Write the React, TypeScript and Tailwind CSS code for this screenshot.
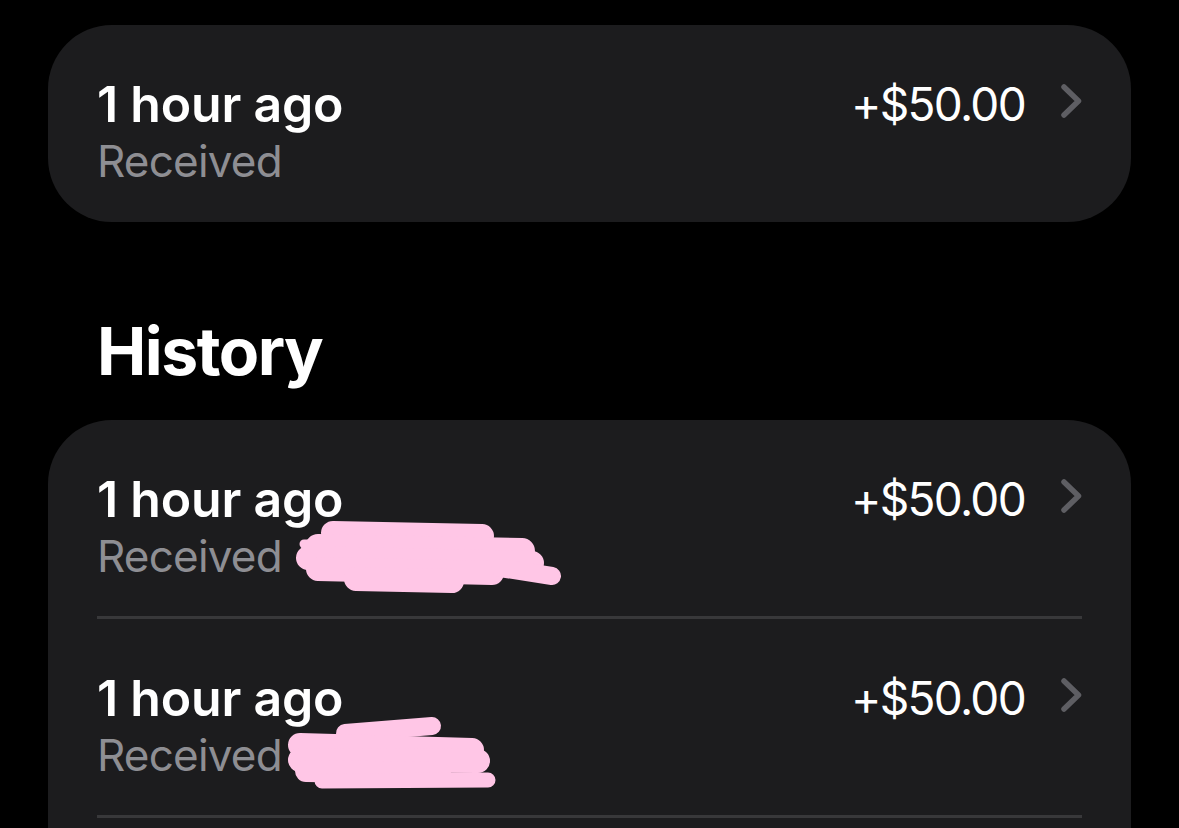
import React from 'react'

type Tx = { id: number; when: string; label: string; amount: string; scribble?: 'a' | 'b' }

const PINK = '#ffc6e6'

function Scribble({ kind }: { kind: 'a' | 'b' }) {
  // redaction marks over the row; viewBox uses page coords
  if (kind === 'a') {
    return (
      <svg className="absolute left-0 top-0 pointer-events-none" width="600" height="196" viewBox="48 420 600 196">
        <g stroke={PINK} strokeLinecap="round" fill="none">
          <path d="M333 533 L482 536" strokeWidth="24" />
          <path d="M318 547 L522 551" strokeWidth="26" />
          <path d="M308 558 L532 563" strokeWidth="24" />
          <path d="M318 569 L492 573" strokeWidth="24" />
          <path d="M356 579 L452 581" strokeWidth="24" />
          <path d="M500 568 L552 576" strokeWidth="18" />
          <path d="M304 544 L330 544" strokeWidth="9" />
        </g>
      </svg>
    )
  }
  return (
    <svg className="absolute left-0 top-0 pointer-events-none" width="600" height="196" viewBox="48 619 600 196">
      <g stroke={PINK} strokeLinecap="round" fill="none">
        <path d="M345 733 L432 726" strokeWidth="18" />
        <path d="M300 745 L472 750" strokeWidth="24" />
        <path d="M300 760 L478 761" strokeWidth="24" />
        <path d="M306 771 L440 773" strokeWidth="22" />
        <path d="M322 781 L488 780" strokeWidth="15" />
      </g>
    </svg>
  )
}

function Chevron() {
  return (
    <svg width="22" height="36" viewBox="0 0 22 36" className="mt-[9px] shrink-0">
      <path d="M4 4 L18.5 18 L4 32" stroke="#5e5e63" strokeWidth="5.5" strokeLinecap="round" strokeLinejoin="round" fill="none" />
    </svg>
  )
}

function Row({ tx, divider }: { tx: Tx; divider: boolean }) {
  return (
    <div className="relative px-[49px]">
      <div className={`flex justify-between h-[196px] ${divider ? 'border-b-[3px] border-[#38383a] h-[199px]' : ''}`}>
        <div className="pt-[49px]">
          <div className="text-[50px] leading-[60px] font-semibold text-white tracking-[-0.2px]">{tx.when}</div>
          <div className="text-[44px] leading-[54px] text-[#8e8e93] tracking-[-0.8px]">{tx.label}</div>
        </div>
        <div className="pt-[49px] flex items-start gap-[35px]">
          <div className="text-[46px] leading-[60px] text-white tracking-[-1.7px]">{tx.amount}</div>
          <Chevron />
        </div>
      </div>
      {tx.scribble && <Scribble kind={tx.scribble} />}
    </div>
  )
}

const pending: Tx[] = [{ id: 1, when: '1 hour ago', label: 'Received', amount: '+$50.00' }]
const history: Tx[] = [
  { id: 2, when: '1 hour ago', label: 'Received', amount: '+$50.00', scribble: 'a' },
  { id: 3, when: '1 hour ago', label: 'Received', amount: '+$50.00', scribble: 'b' },
]

export default function App() {
  return (
    <div className="h-[828px] overflow-hidden bg-black px-[48px] pt-[25px]" style={{ fontFamily: 'Inter, "Noto Sans", sans-serif' }}>
      <div className="bg-[#1c1c1e] rounded-[64px] overflow-hidden h-[197px]">
        {pending.map(tx => <Row key={tx.id} tx={tx} divider={false} />)}
      </div>

      <h2 className="mt-[89px] mb-[29px] pl-[49px] text-[66px] leading-[80px] font-bold text-white tracking-[-1.5px]">History</h2>

      <div className="bg-[#1c1c1e] rounded-t-[64px] pb-[200px]">
        {history.map(tx => <Row key={tx.id} tx={tx} divider />)}
      </div>
    </div>
  )
}
